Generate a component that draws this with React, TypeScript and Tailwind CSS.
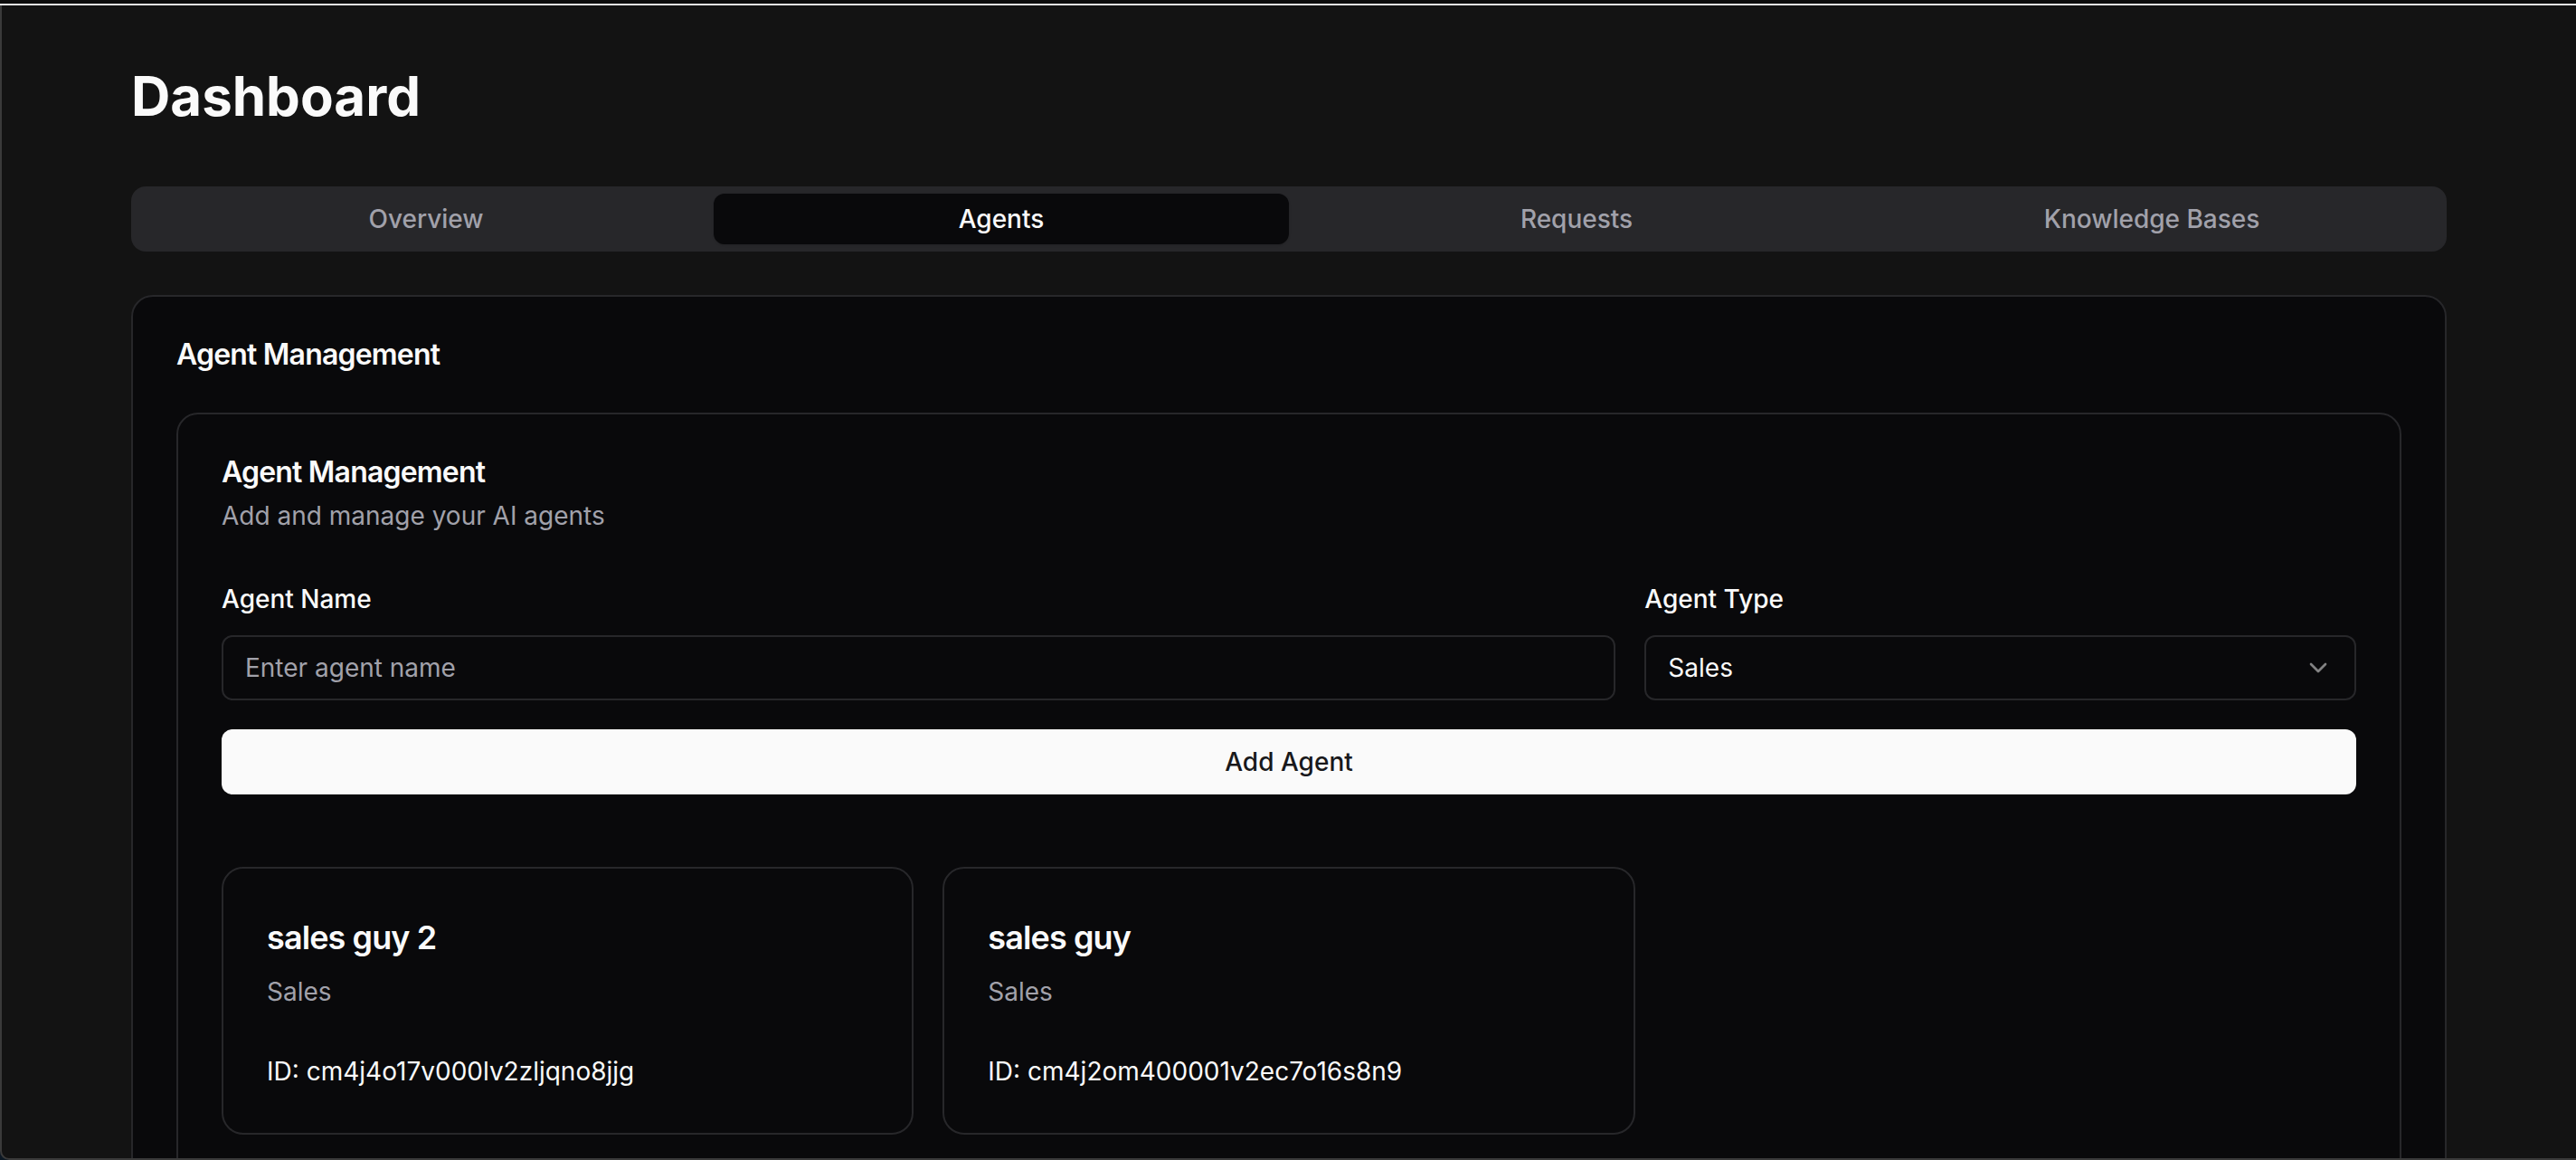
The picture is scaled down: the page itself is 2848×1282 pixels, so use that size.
import { ChevronDown } from 'lucide-react';

const tabs = ['Overview', 'Agents', 'Requests', 'Knowledge Bases'];

const agents = [
  { name: 'sales guy 2', type: 'Sales', id: 'cm4j4o17v000lv2zljqno8jjg' },
  { name: 'sales guy', type: 'Sales', id: 'cm4j2om400001v2ec7o16s8n9' },
];

function AgentCard({ name, type, id }: { name: string; type: string; id: string }) {
  return (
    <div className="rounded-[24px] border-2 border-[#27272a] bg-[#09090b]">
      <div className="flex flex-col gap-[12px] p-[48px]">
        <h3 className="text-[36px] leading-[56px] font-semibold tracking-tight text-[#fafafa]">{name}</h3>
        <p className="text-[28px] leading-[40px] text-[#a1a1aa]">{type}</p>
      </div>
      <div className="px-[48px] pb-[48px]">
        <p className="text-[28px] leading-[40px] text-[#fafafa]">ID: {id}</p>
      </div>
    </div>
  );
}

export default function App() {
  const active = 'Agents';

  return (
    <div className="flex h-[1282px] flex-col bg-[#0c1824] font-[Inter,ui-sans-serif,sans-serif]">
      {/* window top edge */}
      <div className="h-[4px] bg-[#0d0d0d]" />
      <div className="h-[2px] bg-[#e4e4e4]" />

      <div className="flex-1 overflow-hidden rounded-bl-[10px] border-b-2 border-l-2 border-[#3a3a3a] bg-[#131313]">
        <div className="mx-auto w-[2560px] pt-[64px]">
          <h1 className="text-[60px] leading-[72px] font-bold text-[#fafafa]">Dashboard</h1>

          {/* Tabs */}
          <div className="mt-[64px] grid h-[72px] grid-cols-4 rounded-[16px] bg-[#27272a] p-[8px]">
            {tabs.map((tab) => (
              <div
                key={tab}
                className={`flex items-center justify-center rounded-[12px] text-[28px] font-medium ${
                  tab === active
                    ? 'bg-[#09090b] text-[#fafafa] shadow-sm'
                    : 'text-[#a1a1aa]'
                }`}
              >
                {tab}
              </div>
            ))}
          </div>

          {/* Agent Management */}
          <div className="mt-[48px] rounded-[24px] border-2 border-[#27272a] bg-[#09090b]">
            <div className="p-[48px]">
              <h2 className="text-[32px] leading-none font-semibold tracking-tight text-[#fafafa]">Agent Management</h2>
            </div>

            <div className="px-[48px] pb-[48px]">
              <div className="rounded-[24px] border-2 border-[#27272a] bg-[#09090b]">
                <div className="flex flex-col gap-[12px] p-[48px]">
                  <h3 className="text-[32px] leading-none font-semibold tracking-tight text-[#fafafa]">Agent Management</h3>
                  <p className="text-[28px] leading-[40px] text-[#a1a1aa]">Add and manage your AI agents</p>
                </div>

                <div className="px-[48px] pb-[48px]">
                  <div className="flex gap-[32px] pt-[4px]">
                    <div className="flex flex-1 flex-col gap-[20px]">
                      <label className="text-[28px] leading-[40px] font-medium text-[#fafafa]">Agent Name</label>
                      <input
                        placeholder="Enter agent name"
                        className="h-[72px] w-full rounded-[12px] border-2 border-[#27272a] bg-transparent px-[24px] text-[28px] text-[#fafafa] placeholder:text-[#a1a1aa] outline-none"
                      />
                    </div>
                    <div className="flex w-1/3 flex-col gap-[20px]">
                      <label className="text-[28px] leading-[40px] font-medium text-[#fafafa]">Agent Type</label>
                      <div className="flex h-[72px] items-center justify-between rounded-[12px] border-2 border-[#27272a] px-[24px] text-[28px] text-[#fafafa]">
                        <span>Sales</span>
                        <ChevronDown size={32} className="text-[#fafafa] opacity-50" />
                      </div>
                    </div>
                  </div>

                  <button className="mt-[32px] flex h-[72px] w-full items-center justify-center rounded-[12px] bg-[#fafafa] text-[28px] font-medium text-[#18181b]">
                    Add Agent
                  </button>

                  <div className="mt-[80px] grid grid-cols-3 gap-[32px]">
                    {agents.map((agent) => (
                      <AgentCard key={agent.id} {...agent} />
                    ))}
                  </div>
                </div>
              </div>
            </div>
          </div>
        </div>
      </div>
    </div>
  );
}
